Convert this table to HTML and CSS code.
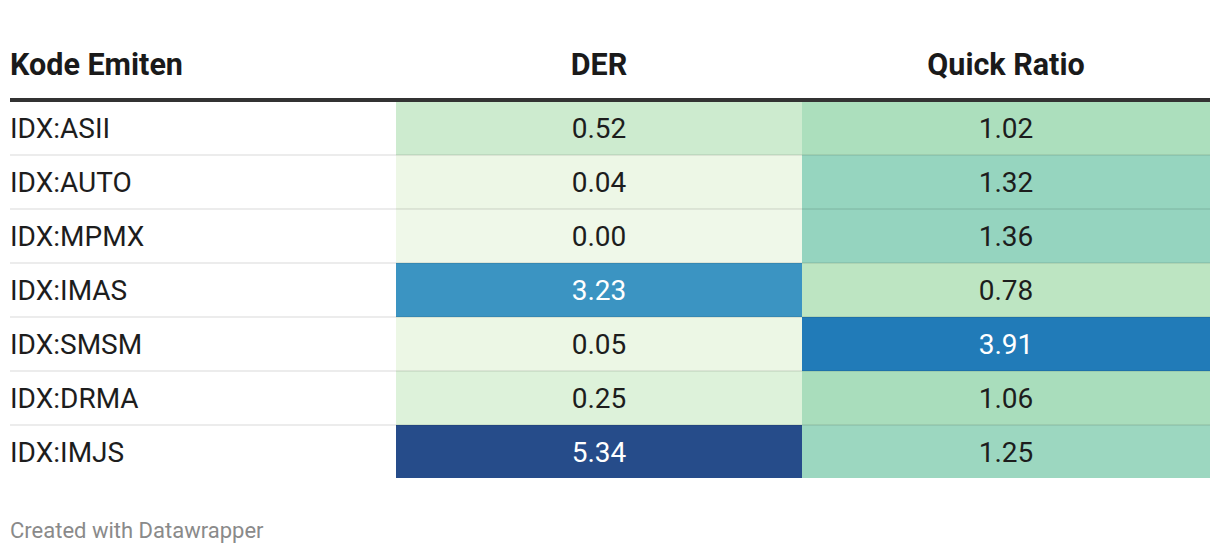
FILE: index.html
```html
<!DOCTYPE html>
<html lang="id">
<head>
<meta charset="utf-8">
<title>Kode Emiten — DER & Quick Ratio</title>
<link rel="stylesheet" href="styles.css">
</head>
<body>
<div class="chart">
  <table class="dw-table">
    <colgroup>
      <col class="c-name">
      <col class="c-der">
      <col class="c-qr">
    </colgroup>
    <thead>
      <tr>
        <th class="left">Kode Emiten</th>
        <th>DER</th>
        <th>Quick Ratio</th>
      </tr>
    </thead>
    <tbody>
      <tr><td class="left">IDX:ASII</td><td class="h-cdebcf">0.52</td><td class="h-acdfbd">1.02</td></tr>
      <tr><td class="left">IDX:AUTO</td><td class="h-edf7e6">0.04</td><td class="h-96d5bf">1.32</td></tr>
      <tr><td class="left">IDX:MPMX</td><td class="h-eff8e9">0.00</td><td class="h-95d4bf">1.36</td></tr>
      <tr><td class="left">IDX:IMAS</td><td class="h-3b94c2 inv">3.23</td><td class="h-bde5c2">0.78</td></tr>
      <tr><td class="left">IDX:SMSM</td><td class="h-ecf7e5">0.05</td><td class="h-217bb8 inv">3.91</td></tr>
      <tr><td class="left">IDX:DRMA</td><td class="h-ddf2da">0.25</td><td class="h-a9ddbc">1.06</td></tr>
      <tr><td class="left">IDX:IMJS</td><td class="h-264c8a inv">5.34</td><td class="h-9cd7c0">1.25</td></tr>
    </tbody>
  </table>
  <div class="footer">Created with Datawrapper</div>
</div>
</body>
</html>
```
FILE: styles.css
```css
html, body {
  margin: 0;
  padding: 0;
  background: #ffffff;
}

body {
  font-family: Roboto, "Noto Sans", "Liberation Sans", sans-serif;
  color: #1d1d1d;
}

.chart {
  padding: 47px 10px 0 10px;
}

.dw-table {
  width: 1200px;
  border-collapse: collapse;
  table-layout: fixed;
}

.c-name { width: 386px; }
.c-der { width: 406px; }
.c-qr { width: 408px; }

.dw-table th {
  font-size: 30.5px;
  font-weight: 700;
  line-height: 36px;
  padding: 0 0 15px 0;
  text-align: center;
  border-bottom: 4px solid #333333;
  color: #1a1a1a;
}

.dw-table td {
  font-size: 28px;
  font-weight: 400;
  line-height: 50px;
  height: 50px;
  padding: 2px 0 0 0;
  text-align: center;
  border-bottom: 2px solid rgba(0, 0, 0, 0.075);
  color: #1d1d1d;
}

.dw-table tbody tr:last-child td {
  border-bottom: none;
}

.dw-table .left {
  text-align: left;
}

.dw-table td.inv {
  color: #ffffff;
}

.h-cdebcf { background: #cdebcf; }
.h-edf7e6 { background: #edf7e6; }
.h-eff8e9 { background: #eff8e9; }
.h-3b94c2 { background: #3b94c2; }
.h-ecf7e5 { background: #ecf7e5; }
.h-ddf2da { background: #ddf2da; }
.h-264c8a { background: #264c8a; }
.h-acdfbd { background: #acdfbd; }
.h-96d5bf { background: #96d5bf; }
.h-95d4bf { background: #95d4bf; }
.h-bde5c2 { background: #bde5c2; }
.h-217bb8 { background: #217bb8; }
.h-a9ddbc { background: #a9ddbc; }
.h-9cd7c0 { background: #9cd7c0; }

.footer {
  margin-top: 40px;
  font-size: 22px;
  line-height: 26px;
  color: #8a8a8a;
}
```
